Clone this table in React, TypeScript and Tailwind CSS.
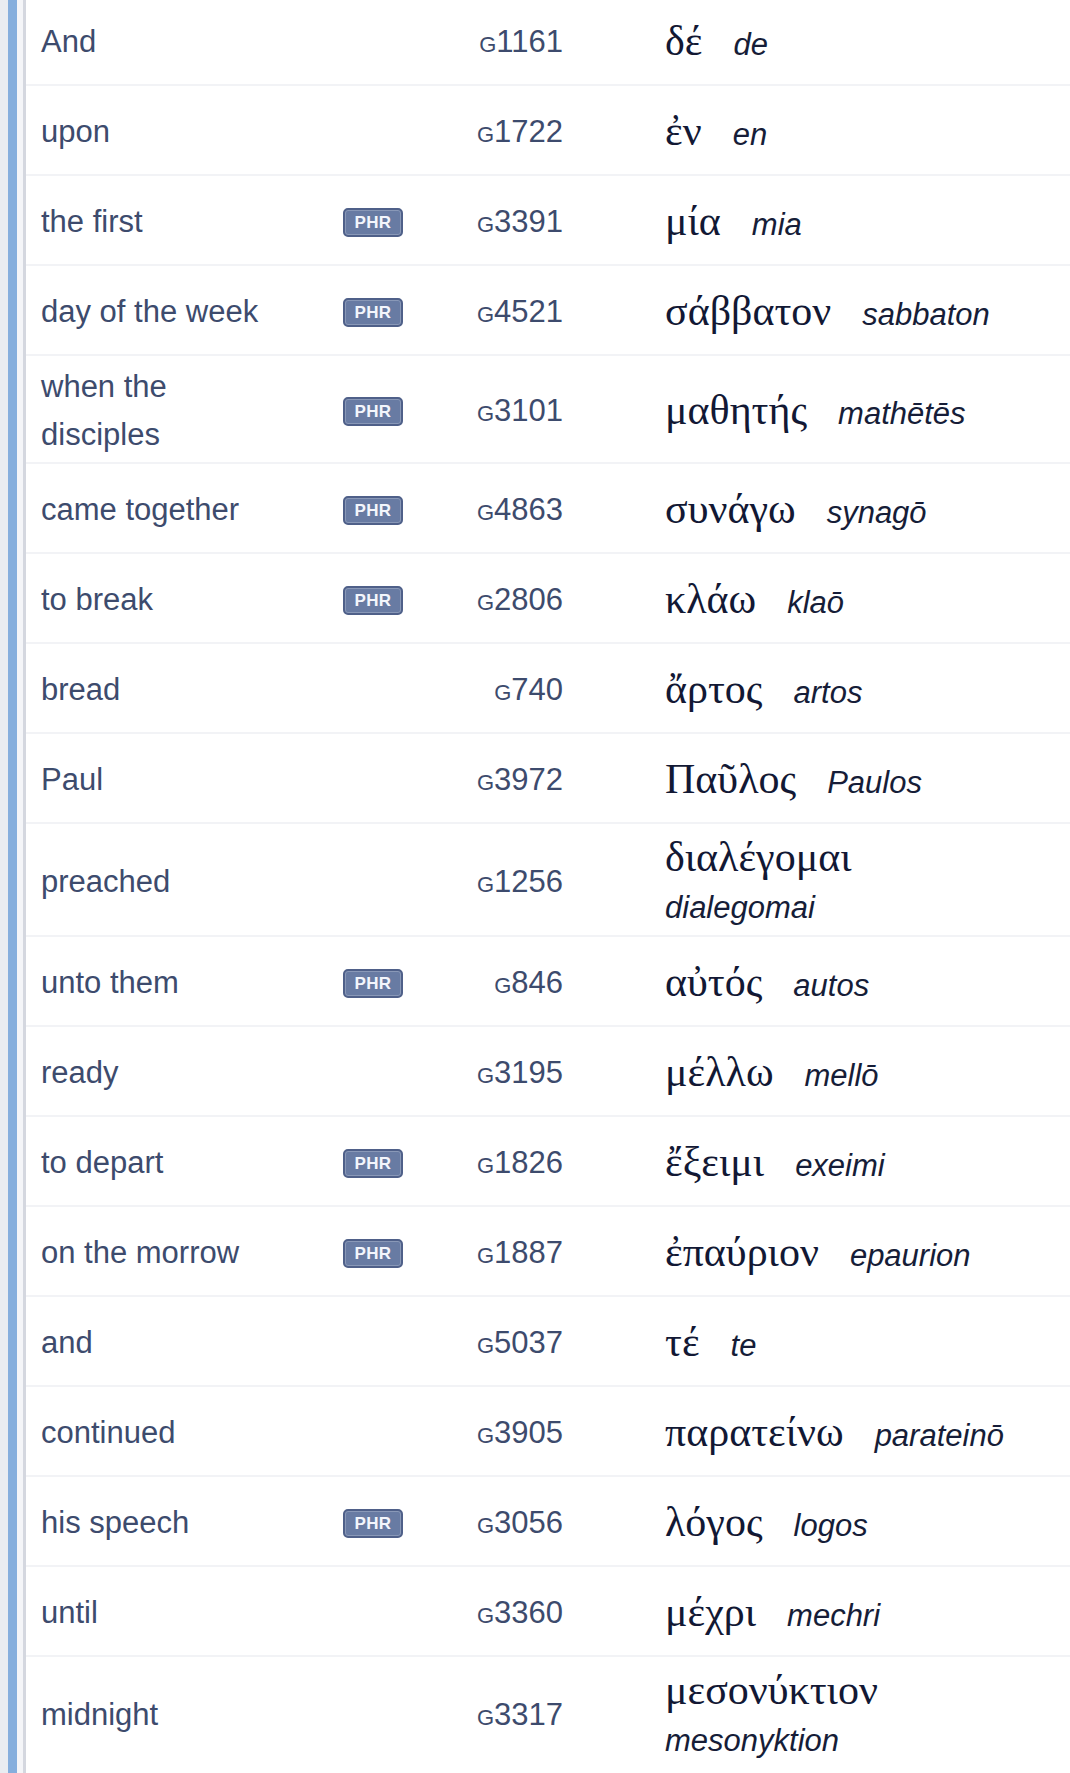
import React from 'react';

type Row = {
  en: string;
  phr?: boolean;
  num: string;
  greek: string;
  translit: string;
};

const rows: Row[] = [
  { en: 'And', num: '1161', greek: 'δέ', translit: 'de' },
  { en: 'upon', num: '1722', greek: 'ἐν', translit: 'en' },
  { en: 'the first', phr: true, num: '3391', greek: 'μία', translit: 'mia' },
  { en: 'day of the week', phr: true, num: '4521', greek: 'σάββατον', translit: 'sabbaton' },
  { en: 'when the disciples', phr: true, num: '3101', greek: 'μαθητής', translit: 'mathētēs' },
  { en: 'came together', phr: true, num: '4863', greek: 'συνάγω', translit: 'synagō' },
  { en: 'to break', phr: true, num: '2806', greek: 'κλάω', translit: 'klaō' },
  { en: 'bread', num: '740', greek: 'ἄρτος', translit: 'artos' },
  { en: 'Paul', num: '3972', greek: 'Παῦλος', translit: 'Paulos' },
  { en: 'preached', num: '1256', greek: 'διαλέγομαι', translit: 'dialegomai' },
  { en: 'unto them', phr: true, num: '846', greek: 'αὐτός', translit: 'autos' },
  { en: 'ready', num: '3195', greek: 'μέλλω', translit: 'mellō' },
  { en: 'to depart', phr: true, num: '1826', greek: 'ἔξειμι', translit: 'exeimi' },
  { en: 'on the morrow', phr: true, num: '1887', greek: 'ἐπαύριον', translit: 'epaurion' },
  { en: 'and', num: '5037', greek: 'τέ', translit: 'te' },
  { en: 'continued', num: '3905', greek: 'παρατείνω', translit: 'parateinō' },
  { en: 'his speech', phr: true, num: '3056', greek: 'λόγος', translit: 'logos' },
  { en: 'until', num: '3360', greek: 'μέχρι', translit: 'mechri' },
  { en: 'midnight', num: '3317', greek: 'μεσονύκτιον', translit: 'mesonyktion' },
];

function PhrBadge() {
  return (
    <span className="inline-flex items-center justify-center w-[60px] h-[29px] rounded-[5px] border-2 border-[#4f6089] bg-[#687ba3] shadow-[inset_0_0_0_1px_rgba(255,255,255,0.22)] text-[#f3f6fc] text-[17px] leading-none font-bold tracking-[0.3px] font-['Liberation_Sans',Arial,sans-serif]">
      PHR
    </span>
  );
}

export default function App() {
  return (
    <div className="min-h-screen bg-white flex font-['Liberation_Sans',Arial,sans-serif] overflow-hidden">
      {/* левая полоса */}
      <div className="w-[8px] bg-[#e9ecf1] shrink-0" />
      <div className="w-[9px] bg-[#85aedd] shrink-0" />
      <div className="w-[6px] bg-[#f4f5f8] shrink-0" />
      <div className="w-[3px] bg-[#d4d7df] shrink-0" />

      {/* таблица */}
      <div className="flex-1 flex flex-col -mt-[4px]">
        {rows.map((r) => (
          <div
            key={r.num}
            className="flex items-center min-h-[90px] pt-[7px] pb-[3px] border-b-2 border-[#f2f3f6] last:border-b-0"
          >
            <div className="w-[302px] shrink-0 pl-[15px] pr-[50px] text-[31px] leading-[48px] text-[#3d4b6d]">
              {r.en}
            </div>
            <div className="w-[90px] shrink-0 pl-[15px] flex items-center">
              {r.phr && <PhrBadge />}
            </div>
            <div className="w-[145px] shrink-0 text-right text-[31px] leading-[48px] text-[#3d4b6d]">
              <span className="text-[22px] leading-none">G</span>
              <span>{r.num}</span>
            </div>
            <div className="w-[460px] shrink-0 pl-[102px]">
              <div className="flex flex-wrap items-baseline gap-x-[31px] max-w-[360px]">
                <span className="text-[42px] leading-[53px] text-[#121834] font-['Liberation_Serif','DejaVu_Serif',serif]">
                  {r.greek}
                </span>
                <span className="text-[31px] leading-[48px] italic text-[#161d38]">
                  {r.translit}
                </span>
              </div>
            </div>
          </div>
        ))}
      </div>
    </div>
  );
}
